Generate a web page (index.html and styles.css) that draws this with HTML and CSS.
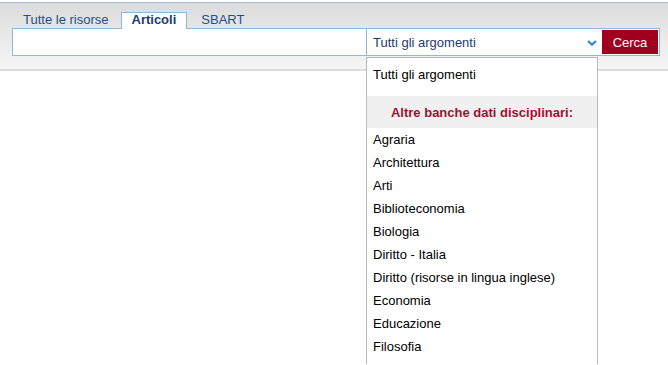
FILE: index.html
```html
<!DOCTYPE html>
<html lang="it">
<head>
<meta charset="utf-8">
<title>Ricerca</title>
<link rel="stylesheet" href="styles.css">
</head>
<body>
<div class="header">
  <div class="tabs">
    <span class="tab">Tutte le risorse</span>
    <span class="tab active">Articoli</span>
    <span class="tab">SBART</span>
  </div>
  <div class="searchbox">
    <div class="query"></div>
    <div class="select">
      <span class="select-label">Tutti gli argomenti</span>
      <svg class="chevron" width="10" height="6" viewBox="0 0 10 6"><path d="M1 1 L5 4.6 L9 1" fill="none" stroke="#2f8acb" stroke-width="2.2"/></svg>
    </div>
    <button class="btn">Cerca</button>
    <div class="dropdown">
      <div class="opt first">Tutti gli argomenti</div>
      <div class="group">Altre banche dati disciplinari:</div>
      <div class="opt">Agraria</div>
      <div class="opt">Architettura</div>
      <div class="opt">Arti</div>
      <div class="opt">Biblioteconomia</div>
      <div class="opt">Biologia</div>
      <div class="opt">Diritto - Italia</div>
      <div class="opt">Diritto (risorse in lingua inglese)</div>
      <div class="opt">Economia</div>
      <div class="opt">Educazione</div>
      <div class="opt">Filosofia</div>
    </div>
  </div>
</div>
</body>
</html>
```
FILE: styles.css
```css
html, body {
  margin: 0;
  padding: 0;
  background: #fff;
  overflow: hidden;
  height: 365px;
}
body {
  font-family: "Liberation Sans", Arial, sans-serif;
  font-size: 13px;
}
.header {
  margin-top: 2px;
  border-top: 1px solid #a9bfd1;
  border-bottom: 2px solid #dcdcdc;
  background: linear-gradient(#dcdcdc, #f6f6f6);
  padding: 9px 8px 13px 12px;
}
.tabs {
  display: flex;
  margin-bottom: -1px;
  position: relative;
  z-index: 2;
}
.tab {
  display: block;
  padding: 0 10px 2px;
  line-height: 14px;
  border: 1px solid transparent;
  border-bottom: 0;
  margin-right: 1px;
  color: #1d4f8c;
}
.tab:nth-child(2) {
  margin-right: 3px;
}
.tab.active {
  background: #fff;
  border-color: #8fb9d2;
  color: #1a3d6d;
  font-weight: bold;
}
.searchbox {
  position: relative;
  display: flex;
  height: 26px;
  border: 1px solid #8fb9d2;
  background: #fff;
  padding: 0 1px 0 0;
}
.query {
  flex: 1;
}
.select {
  width: 228px;
  border-left: 1px solid #8fb9d2;
  display: flex;
  align-items: center;
  padding-left: 6px;
  color: #1e3c6e;
  position: relative;
}
.select-label {
  flex: 1;
  line-height: 26px;
  padding-top: 1px;
}
.chevron {
  margin-right: 4px;
  margin-top: 1px;
}
.btn {
  margin: 1px 0 1px 1px;
  width: 56px;
  height: 24px;
  border: 0;
  background: #a0001e;
  color: #fff;
  font-family: "Liberation Sans", Arial, sans-serif;
  font-size: 13px;
  padding: 0;
}
.dropdown {
  position: absolute;
  left: 353px;
  top: 28px;
  width: 230px;
  border: 1px solid #b9b9b9;
  border-bottom: 0;
  background: #fff;
  padding-top: 5px;
  padding-bottom: 6px;
  z-index: 3;
}
.opt {
  line-height: 23px;
  padding-left: 6px;
  color: #000;
  white-space: nowrap;
}
.group {
  margin-top: 10px;
  background: #f0f0f0;
  height: 32px;
  line-height: 34px;
  text-align: center;
  font-weight: bold;
  color: #a3102f;
}
```
